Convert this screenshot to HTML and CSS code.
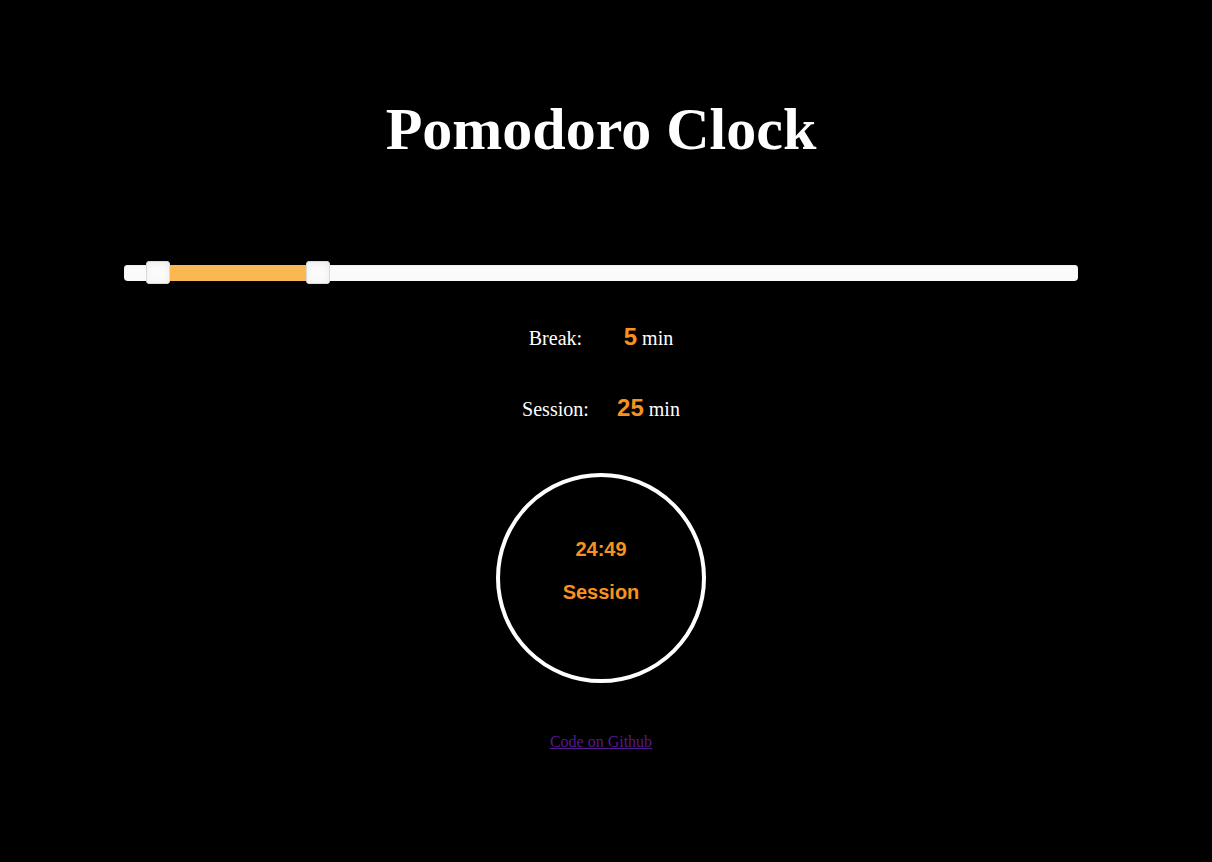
FILE: index.html
```html
<!DOCTYPE html>
<html lang="en">
<head>
<meta charset="utf-8">
<title>Pomodoro Clock</title>
<link rel="stylesheet" href="styles.css">
</head>
<body>
<main class="app">
  <h1 class="title">Pomodoro Clock</h1>
  <div class="slider">
    <div class="slider-connect"></div>
    <div class="slider-handle handle-lower"></div>
    <div class="slider-handle handle-upper"></div>
  </div>
  <p class="setting setting-break">Break: <span class="setting-value">5</span> min</p>
  <p class="setting setting-session">Session: <span class="setting-value">25</span> min</p>
  <div class="timer">
    <div class="timer-time">24:49</div>
    <div class="timer-phase">Session</div>
  </div>
  <p class="footer"><a class="footer-link" href="#">Code on Github</a></p>
</main>
</body>
</html>
```

FILE: styles.css
```css
html, body {
  margin: 0;
  padding: 0;
  background: #000;
}

body {
  font-family: "Liberation Serif", "Times New Roman", serif;
  color: #fff;
}

.app {
  padding: 0 10px 0 0;
  text-align: center;
}

.title {
  margin: 96px 0 0;
  font-size: 60px;
  line-height: 67px;
  font-weight: bold;
}

.slider {
  position: relative;
  width: 954px;
  height: 16px;
  margin: 102px auto 0;
  background: #fafafa;
  border-radius: 4px;
  box-shadow: inset 0 1px 1px #f0f0f0;
}

.slider-connect {
  position: absolute;
  top: 0;
  bottom: 0;
  left: 34px;
  width: 160px;
  background: #fab853;
}

.slider-handle {
  position: absolute;
  top: -4px;
  width: 24px;
  height: 23px;
  box-sizing: border-box;
  background: #fbfbfb;
  border: 1px solid #d9d9d9;
  border-radius: 3px;
  box-shadow: inset 0 0 1px #fff, inset 0 1px 7px #ebebeb;
}

.handle-lower {
  left: 22px;
}

.handle-upper {
  left: 182px;
}

.setting {
  margin: 0;
  font-size: 20px;
  line-height: 30px;
}

.setting-break {
  margin-top: 41px;
}

.setting-session {
  margin-top: 40px;
}

.setting-value {
  display: inline-block;
  width: 50px;
  text-align: right;
  font-family: "Liberation Sans", Arial, sans-serif;
  font-weight: bold;
  font-size: 24px;
  color: #f7921e;
}

.timer {
  width: 202px;
  height: 202px;
  margin: 49px auto 0;
  border: 4px solid #fff;
  border-radius: 50%;
  font-family: "Liberation Sans", Arial, sans-serif;
  font-weight: bold;
  font-size: 20px;
  color: #f7921e;
}

.timer-time {
  padding-top: 61px;
  line-height: 23px;
}

.timer-phase {
  margin-top: 20px;
  line-height: 23px;
}

.footer {
  margin: 50px 0 0;
  font-size: 16px;
  line-height: 18px;
}

.footer-link {
  color: #551a8b;
}
```
